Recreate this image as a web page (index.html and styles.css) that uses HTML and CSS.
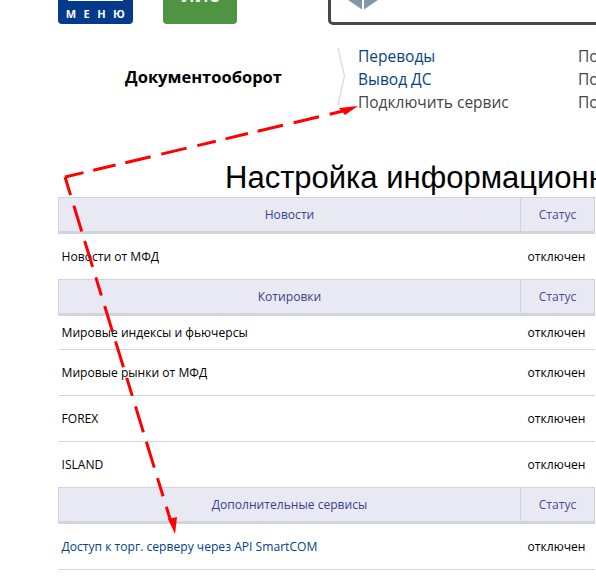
FILE: index.html
```html
<!DOCTYPE html>
<html>
<head>
  <meta charset="UTF-8">
  <title>Настройка информационных сервисов</title>
  <link rel="stylesheet" href="styles.css">
</head>
<body>
  <div class="page">
    <div class="topbar">
      <div class="menu-btn">
        <div class="menu-line"></div>
        <div class="menu-text">МЕНЮ</div>
      </div>
      <div class="iis-btn"><span>ИИС</span></div>
      <div class="search-box">
        <svg class="search-icon" width="30" height="10" viewBox="0 0 30 10">
          <path d="M0 0H14V9.500Z" fill="#8398a6"/>
          <path d="M16 0H30L16 9.500Z" fill="#8398a6"/>
        </svg>
      </div>
    </div>

    <div class="docs">
      <div class="docs-title">Документооборот</div>
      <svg class="chevron" width="12" height="58" viewBox="0 0 12 58">
        <path d="M1 0L7.500 28L1 57" fill="none" stroke="#dfdfdf" stroke-width="1.500"/>
      </svg>
      <div class="docs-links">
        <a>Переводы</a>
        <a>Вывод ДС</a>
        <a class="hover">Подключить сервис</a>
      </div>
      <div class="docs-links more">
        <a>По</a>
        <a>По</a>
        <a>По</a>
      </div>
    </div>

    <h1>Настройка информационных сервисов</h1>

    <table class="services">
      <tr class="head"><th>Новости</th><th class="status">Статус</th></tr>
      <tr class="last"><td>Новости от МФД</td><td class="status">отключен</td></tr>
      <tr class="head"><th>Котировки</th><th class="status">Статус</th></tr>
      <tr class="short"><td>Мировые индексы и фьючерсы</td><td class="status">отключен</td></tr>
      <tr><td>Мировые рынки от МФД</td><td class="status">отключен</td></tr>
      <tr><td>FOREX</td><td class="status">отключен</td></tr>
      <tr class="last"><td>ISLAND</td><td class="status">отключен</td></tr>
      <tr class="head"><th>Дополнительные сервисы</th><th class="status">Статус</th></tr>
      <tr><td class="link">Доступ к торг. серверу через API SmartCOM</td><td class="status">отключен</td></tr>
    </table>
  </div>

  <!-- стрелка поверх страницы -->
  <svg class="arrow" width="596" height="578" viewBox="0 0 596 578">
    <path d="M65 177L343 111" fill="none" stroke="#ff0000" stroke-width="3" stroke-dasharray="19 10 23 10 26 11 26 11"/>
    <path d="M65 177L171 522" fill="none" stroke="#ff0000" stroke-width="3" stroke-dasharray="19 11 27 10 27 11"/>
    <path d="M358 106L339 108L345 115Z" fill="#ff0000"/>
    <path d="M175 534L168 519L177 517Z" fill="#ff0000"/>
  </svg>
</body>
</html>
```

FILE: styles.css
```css
html, body {
  margin: 0;
  padding: 0;
  background: #fff;
  overflow: hidden;
}
body {
  width: 596px;
  height: 578px;
  font-family: "Open Sans", "Noto Sans", sans-serif;
  color: #000;
}
.page {
  padding-left: 58px;
}
.topbar {
  display: flex;
  height: 25px;
  overflow: hidden;
}
.menu-btn {
  width: 75px;
  height: 24px;
  background: #033a8b;
  border-radius: 0 0 4px 4px;
  color: #fff;
  text-align: center;
  flex-shrink: 0;
}
.menu-line {
  height: 1px;
  margin: 0 10px;
  background: #fff;
}
.menu-text {
  margin-top: 6px;
  font-size: 11px;
  line-height: 13px;
  font-weight: 700;
  letter-spacing: 7.500px;
  padding-left: 7px;
  white-space: nowrap;
}
.iis-btn {
  width: 74px;
  height: 24px;
  margin-left: 30px;
  background: #4f9443;
  border-radius: 0 0 4px 4px;
  color: #fff;
  font-size: 17px;
  font-weight: 700;
  line-height: 20px;
  text-align: center;
  overflow: hidden;
  flex-shrink: 0;
}
.iis-btn span {
  display: block;
  margin-top: -14px;
}
.search-box {
  width: 300px;
  height: 25px;
  margin-left: 91px;
  box-sizing: border-box;
  border: 3px solid #4b4453;
  border-top: 0;
  border-radius: 0 0 0 5px;
  flex-shrink: 0;
  padding-left: 17px;
}
.search-icon {
  display: block;
}
.docs {
  display: flex;
  margin-top: 23px;
  height: 67px;
  white-space: nowrap;
}
.docs-title {
  width: 267px;
  padding-left: 12px;
  padding-top: 17px;
  text-align: center;
  font-size: 16.500px;
  line-height: 24px;
  font-weight: 700;
  flex-shrink: 0;
}
.chevron {
  flex-shrink: 0;
}
.docs-links {
  display: flex;
  flex-direction: column;
  width: 220px;
  margin-left: 9px;
  flex-shrink: 0;
  font-size: 15.500px;
  line-height: 23px;
  margin-top: -3px;
  color: #034287;
}
.docs-links .hover {
  color: #3f4549;
}
.more {
  margin-left: 0;
  color: #3f4549;
}
h1 {
  margin: 44px 0 0 167px;
  font-family: "Liberation Sans", Arial, sans-serif;
  font-size: 31px;
  line-height: 37px;
  font-weight: 400;
  white-space: nowrap;
}
.services {
  width: 537px;
  margin-top: 1px;
  border-collapse: collapse;
  table-layout: fixed;
  font-size: 12.100px;
}
.services th {
  height: 33px;
  padding: 0;
  background: #e9e9f3;
  border: 1px solid #d3d3e0;
  border-bottom: 3px solid #d3d3e0;
  color: #3a3f90;
  font-weight: 400;
}
.services td {
  height: 45px;
  padding: 0 0 0 3px;
  border-bottom: 1px solid #d4d4d4;
}
.services .last td {
  border-bottom: 0;
}
.services .short td {
  height: 33px;
}
.services th.status {
  width: 73px;
  color: #4a4a9a;
}
.services td.status {
  padding-left: 7px;
}
.services td.link {
  color: #034287;
}
.arrow {
  position: absolute;
  left: 0;
  top: 0;
  pointer-events: none;
}
```
